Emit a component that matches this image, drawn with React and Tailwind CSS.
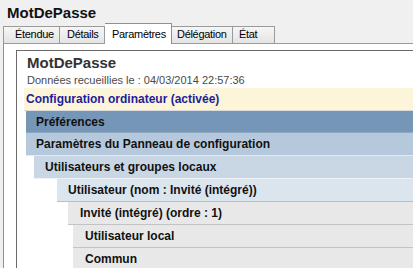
// Fenêtre de rapport RSoP — onglet Paramètres
const font = { fontFamily: '"Liberation Sans", Arial, sans-serif' };

const tabs = [
  { label: "Étendue", w: "w-[57px]", pl: "pl-[11px]", first: true },
  { label: "Détails", w: "w-[45px]", pl: "pl-[7px]" },
  { label: "Paramètres", w: "w-[67px]", pl: "pl-[7px]", active: true },
  { label: "Délégation", w: "w-[61px]", pl: "pl-[5px]" },
  { label: "État", w: "w-[42px]", pl: "pl-[6px]" },
];

const Tab = ({ label, w, pl, first, active }) =>
  active ? (
    <div className={`${w} ${pl} h-[21px] pt-[4px] bg-white border-t border-r border-[#8f8f8f] text-[11px] leading-[12px] tracking-[-0.3px] text-black`}>
      {label}
    </div>
  ) : (
    <div
      className={`${w} ${pl} h-[18px] pt-[1px] bg-linear-to-b from-[#f6f6f6] to-[#e4e4e4] border-t border-b border-r ${
        first ? "border-l" : ""
      } border-[#9a9a9a] text-[11px] leading-[12px] tracking-[-0.3px] text-black`}
    >
      {label}
    </div>
  );

// ── Lignes de la hiérarchie des paramètres ───────────────────────────────────
const rows = [
  { label: "Préférences", ml: "ml-[9px]", pl: "pl-[10px]", bg: "bg-[#7596b6]", h: "h-[22px]", line: "border-[#8fa8c2]" },
  { label: "Paramètres du Panneau de configuration", ml: "ml-[9px]", pl: "pl-[10px]", bg: "bg-[#b6c9dc]", h: "h-[23px]", line: "border-[#e3ebf2]" },
  { label: "Utilisateurs et groupes locaux", ml: "ml-[17px]", pl: "pl-[11px]", bg: "bg-[#c9d7e5]", h: "h-[23px]", line: "border-[#eef2f7]" },
  { label: "Utilisateur (nom : Invité (intégré))", ml: "ml-[40px]", pl: "pl-[11px]", bg: "bg-[#dbe5ee]", h: "h-[23px]", line: "border-[#b9bfc6]" },
  { label: "Invité (intégré) (ordre : 1)", ml: "ml-[51px]", pl: "pl-[12px]", bg: "bg-[#e8e8e8]", h: "h-[23px]", line: "border-[#c3c3c3]" },
  { label: "Utilisateur local", ml: "ml-[56px]", pl: "pl-[12px]", bg: "bg-[#e8e8e8]", h: "h-[23px]", line: "border-[#c3c3c3]" },
  { label: "Commun", ml: "ml-[56px]", pl: "pl-[12px]", bg: "bg-[#e8e8e8]", h: "h-[23px]", line: "border-[#c3c3c3]" },
];

const Row = ({ label, ml, pl, bg, h, line }) => (
  <div className={`${ml} ${pl} ${bg} ${h} shrink-0 flex items-center border-b ${line} text-[12px] font-bold text-[#111]`}>
    {label}
  </div>
);

export default function App() {
  return (
    <div className="w-[413px] h-[268px] bg-[#f0f0f0] overflow-hidden flex flex-col" style={font}>
      {/* Titre */}
      <div className="h-[23px] shrink-0 pt-[4px] pl-[7px] text-[15px] leading-[18px] font-bold text-[#111]">
        MotDePasse
      </div>

      {/* Onglets */}
      <div className="h-[21px] shrink-0 flex items-end pl-[3px]">
        {tabs.map((t) => (
          <Tab key={t.label} {...t} />
        ))}
        <div className="flex-1 h-[1px] bg-[#9a9a9a]" />
      </div>

      {/* Page d'onglet */}
      <div className="flex-1 min-h-0 bg-white border-l border-[#8f8f8f] ml-[3px] pl-[12px] pt-[6px] flex flex-col">
        <div className="flex-1 min-h-0 bg-white border-l border-t border-[#6a6a6a] flex flex-col">
          <div className="mt-[2px] h-[20px] shrink-0 pl-[10px] text-[15px] leading-[20px] font-bold text-[#333]">
            MotDePasse
          </div>
          <div className="h-[14px] shrink-0 pl-[10px] text-[11px] leading-[14px] text-[#4a4a4a]">
            Données recueillies le : 04/03/2014 22:57:36
          </div>
          <div className="mt-[1px] ml-[7px] pl-[2px] h-[22px] shrink-0 flex items-center bg-[#fcf5d9] text-[12px] font-bold text-[#1e1e9a]">
            Configuration ordinateur (activée)
          </div>
          <div className="h-[1px] shrink-0 ml-[7px] bg-[#dcdcdc]" />
          {rows.map((r) => (
            <Row key={r.label} {...r} />
          ))}
        </div>
      </div>
    </div>
  );
}
